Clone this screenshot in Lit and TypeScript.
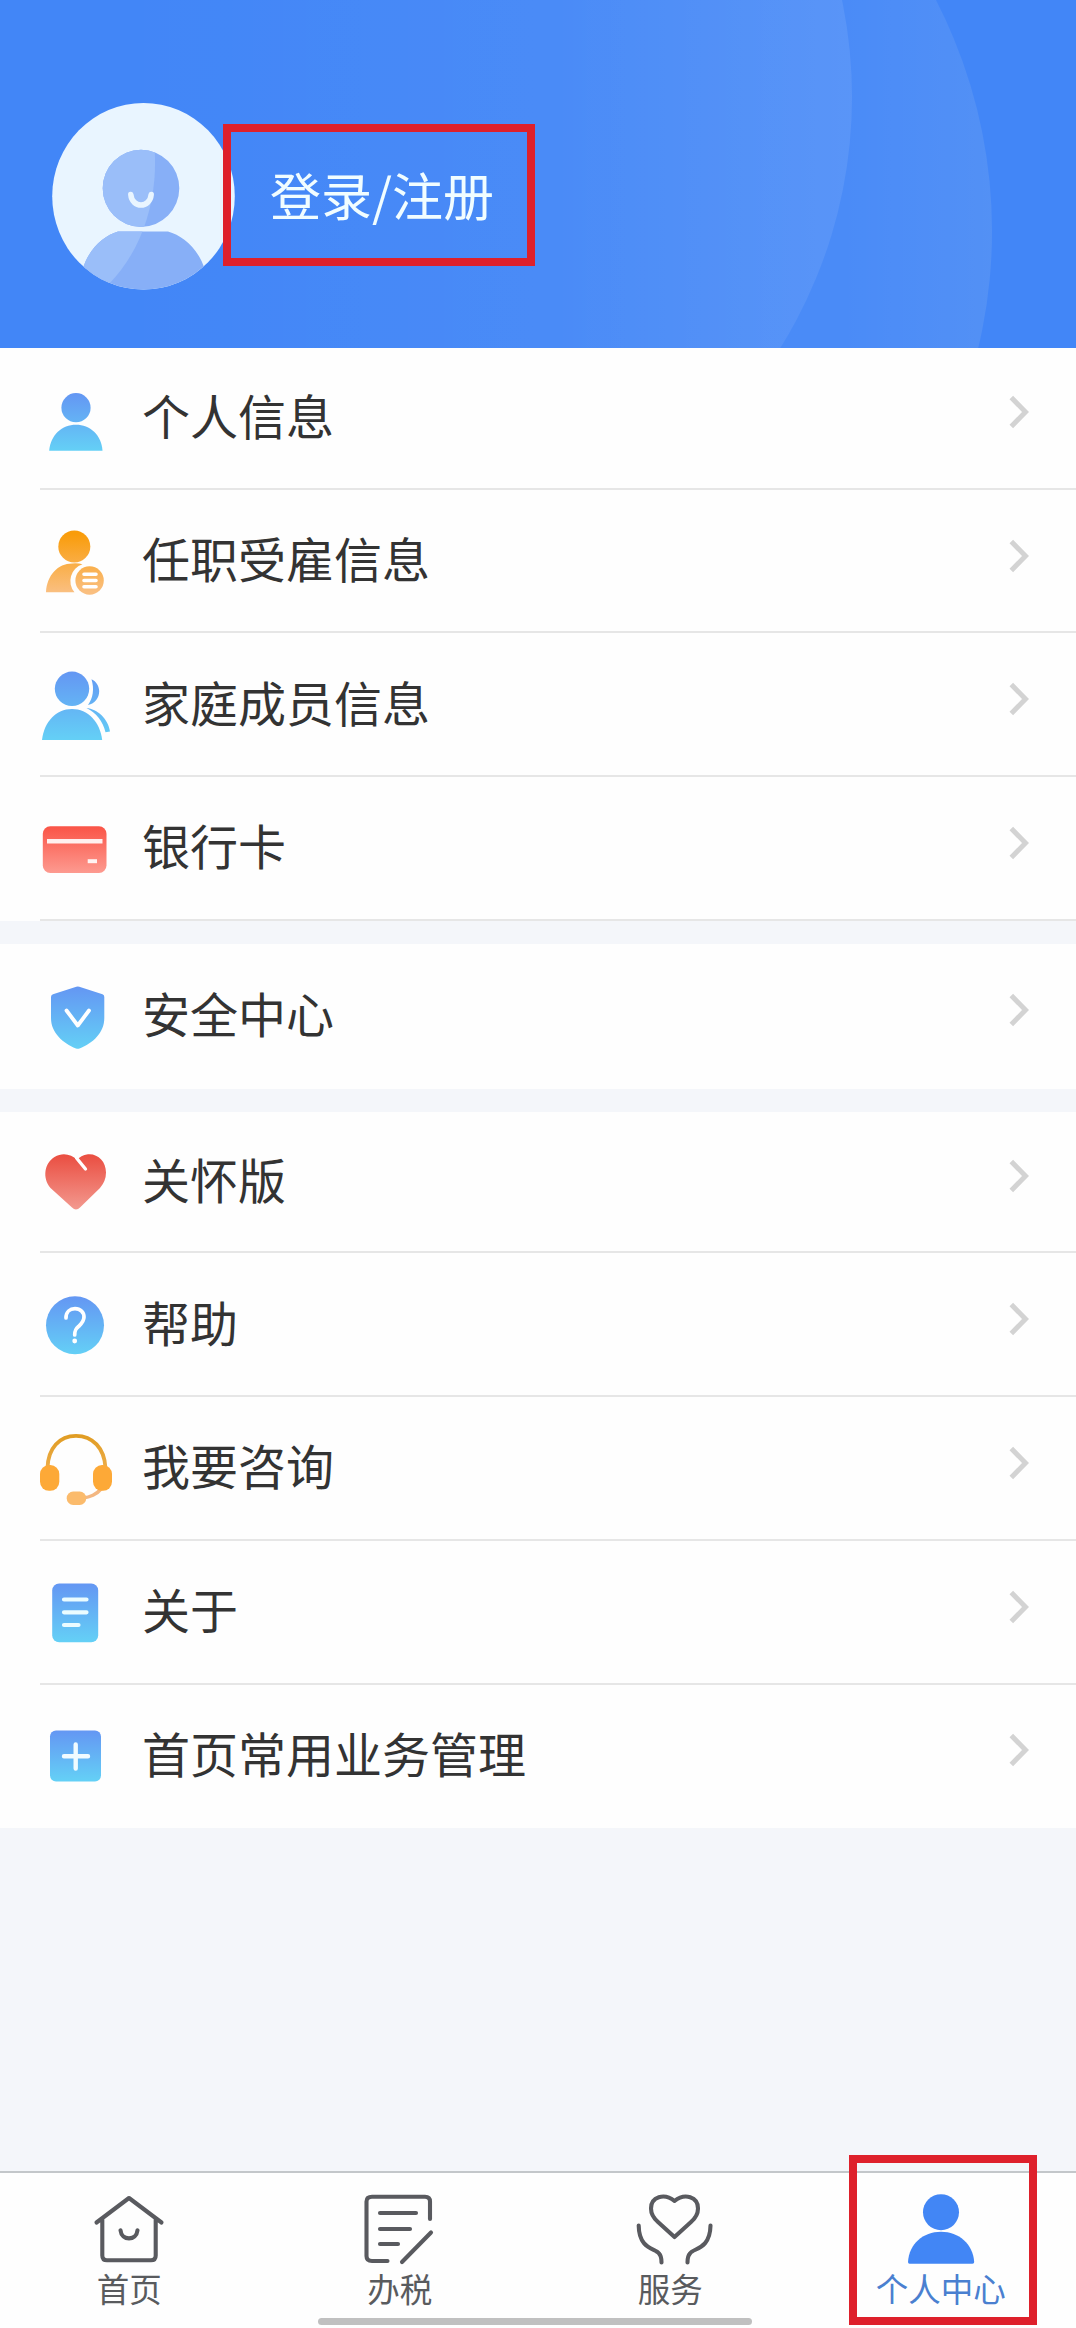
import { LitElement, html, svg, css, type SVGTemplateResult } from "lit";
import { customElement, property } from "lit/decorators.js";

interface Entry {
  label: string;
  icon: string;
}

const SECTIONS: Entry[][] = [
  [
    { label: "个人信息", icon: "person" },
    { label: "任职受雇信息", icon: "job" },
    { label: "家庭成员信息", icon: "family" },
    { label: "银行卡", icon: "card" },
  ],
  [{ label: "安全中心", icon: "shield" }],
  [
    { label: "关怀版", icon: "heart" },
    { label: "帮助", icon: "help" },
    { label: "我要咨询", icon: "headset" },
    { label: "关于", icon: "doc" },
    { label: "首页常用业务管理", icon: "plus" },
  ],
];

/* Vertical gradient spanning y1..y2 of the icon canvas. */
const grad = (id: string, from: string, to: string, y1: number, y2: number) => svg`
  <linearGradient id=${id} gradientUnits="userSpaceOnUse" x1="0" x2="0" y1=${y1} y2=${y2}>
    <stop offset="0" stop-color=${from}></stop><stop offset="1" stop-color=${to}></stop>
  </linearGradient>`;

const BLUE_A = "#6496f3";
const BLUE_B = "#64d0f6";

/* Row icons, drawn on an 80x80 canvas. */
const ICONS: Record<string, SVGTemplateResult> = {
  person: svg`${grad("g", BLUE_A, BLUE_B, 15, 73)}
    <g fill="url(#g)"><circle cx="40" cy="29.700" r="14.600"></circle>
    <path d="M13.200 72.800C14.500 57 26 46.800 40 46.800S65.500 57 66.500 72.800Z"></path></g>`,
  job: svg`${grad("g", "#f99c0a", "#fabf80", 12, 70)}
    <g fill="url(#g)"><circle cx="38.300" cy="24.500" r="16"></circle>
    <path d="M10 70.300C11 53 22 41.500 36 41.500Q42 41 46.500 42.300A17.500 17.500 0 0 0 38.500 70.300Z"></path>
    <circle cx="53.600" cy="58.500" r="14.200"></circle></g>
    <path d="M48 52.200H60M48 58.500H60M48 64.700H60" stroke="#fff" stroke-width="3.600" stroke-linecap="round"></path>`,
  family: svg`${grad("g", BLUE_A, BLUE_B, 6, 75)}
    <g fill="url(#g)"><circle cx="36" cy="23.800" r="17.200"></circle>
    <path d="M6 75C8 57 20 44 36 44S64 57 66.200 75Z"></path>
    <path d="M55.500 14.200C60.500 16.500 63 21 63.200 26C63.200 33 59 38.500 52 40C57 33 58.500 24 55.500 14.200Z"></path>
    <path d="M50.500 43C61 43.800 72.500 54 74 66.500L69.500 67.300C67 56.500 60 47.500 50.500 43Z"></path></g>`,
  card: svg`${grad("g", "#fa5548", "#fd9a90", 18, 64)}
    <rect x="6.800" y="17.300" width="63.700" height="46.700" rx="7.500" fill="url(#g)"></rect>
    <path d="M11 32.200H66.500" stroke="#fff" stroke-opacity=".9" stroke-width="4.400"></path>
    <path d="M51.700 52.200H61" stroke="#fff" stroke-opacity=".9" stroke-width="4"></path>`,
  shield: svg`${grad("g", BLUE_A, BLUE_B, 10, 73)}
    <path d="M40.300 10.800Q41.800 10.200 43.300 10.800L66.500 18.300Q68.300 19 68.300 21V42C68.300 57 57 67 43.500 72.500Q41.800 73.200 40 72.500C27 67 15 57 15 42V21Q15 19 17 18.300Z" fill="url(#g)"></path>
    <path d="M30.500 34.500L41.800 49.500L53 34.500" fill="none" stroke="#fff" stroke-width="3.800" stroke-linecap="round" stroke-linejoin="round"></path>`,
  heart: svg`${grad("g", "#ea4d40", "#f39a90", 12, 68)}
    <path d="M14.500 46C6 36 8.500 21 18.500 15C27 10 35.500 12.500 41 18Q44.500 13.500 52 12.300C62 11.500 70 19.500 70 30.500Q70 39 64 46L44 65.500Q40 69.600 36 65.500Z" fill="url(#g)"></path>
    <path d="M40.500 16L49.500 27" stroke="#fff" stroke-width="3.300" stroke-linecap="round"></path>`,
  help: svg`${grad("g", BLUE_A, BLUE_B, 11, 70)}
    <circle cx="39" cy="40.300" r="29" fill="url(#g)"></circle>
    <path d="M30 33C30 27 34 23.700 39 23.700C44.500 23.700 48 27.300 48 32C48 36.500 45 39 42.500 41.500C39.500 44 38.700 45.500 38.700 50" fill="none" stroke="#fff" stroke-width="3.700" stroke-linecap="round"></path>
    <circle cx="38.700" cy="56" r="2.400" fill="#fff"></circle>`,
  headset: svg`${grad("g", "#e09c22", "#f9bd70", 5, 76)}
    <path d="M11.500 39C12 19 23.500 6.800 40 6.800S68.500 19 69.500 39" fill="none" stroke="url(#g)" stroke-width="3.800"></path>
    <path d="M66 59C60 66 54.500 68 46 69.300" fill="none" stroke="#f3b781" stroke-width="3.500"></path>
    <rect x="4" y="36" width="19.300" height="25.800" rx="9" fill="#fda937"></rect>
    <rect x="57" y="36" width="19" height="25.800" rx="9" fill="#fda937"></rect>
    <rect x="30.700" y="62.500" width="19.500" height="13.500" rx="6.500" fill="#fbbb6c"></rect>`,
  doc: svg`${grad("g", BLUE_A, BLUE_B, 10, 69)}
    <rect x="16.200" y="10.500" width="46" height="58.800" rx="7" fill="url(#g)"></rect>
    <path d="M28 26.500H50.500M28 39.300H50.500M28 52H42.500" stroke="#eafcff" stroke-width="4.200" stroke-linecap="round"></path>`,
  plus: svg`${grad("g", BLUE_A, BLUE_B, 14, 65)}
    <rect x="14" y="14.500" width="51" height="51" rx="6" fill="url(#g)"></rect>
    <path d="M28 40.300H52M39.700 28.500V52.500" stroke="#f0fbff" stroke-width="4.400" stroke-linecap="round"></path>`,
};

/* Tab icons, drawn on an 84x72 canvas. */
const TAB_ICONS: Record<string, SVGTemplateResult> = {
  home: svg`<path d="M9.500 30.500L42 6L74.500 30.500M15.300 27V63.500Q15.300 68.300 20 68.300H64Q68.700 68.300 68.700 63.500V27M33.500 38.300C34.500 49 49.500 49 50.500 38.300"></path>`,
  tax: svg`<path d="M29.500 69H14Q8.500 69 8.500 64V9.500Q8.500 4.700 14 4.700H67Q72 4.700 72 9.500V27M22 21H58M22 37H52M22 52H40M73 40.500L44 70"></path>`,
  serve: svg`<path d="M46.500 9C57 .500 70 5 70 16.500C70 22 67 26.500 63 30L46.500 45L30 30C26 26.500 23 22 23 16.500C23 5 36 .500 46.500 9Z"></path>
    <path d="M10.700 33.500C11 58 28 56 31 61.500Q33.500 64 33.500 70.500M82.500 33.500C82 58 65 56 62 61.500Q59.500 64 59.500 70.500"></path>`,
  me: svg`<g fill="#4286f5" stroke="none"><circle cx="42" cy="20.200" r="18"></circle>
    <path d="M9 70C10 52 24 39.700 42 39.700S74 52 75.200 70Q75.200 71.700 73.500 71.700H10.500Q9 71.700 9 70Z"></path></g>`,
};

@customElement("menu-row")
class MenuRow extends LitElement {
  @property() label = "";
  @property() icon = "";
  @property({ reflect: true }) place = "inner";

  static styles = css`
    :host {
      display: flex;
      align-items: center;
      box-sizing: border-box;
      height: 143.700px;
      padding: 0 46px 0 36px;
    }
    :host([place="first"]) {
      height: 141.700px;
      padding-bottom: 1px;
    }
    :host([place="only"]) {
      height: 145px;
    }
    .icon {
      flex: none;
      width: 80px;
      height: 80px;
      overflow: visible;
    }
    .label {
      flex: 1;
      margin: 0 0 9px 26px;
      font-size: 48px;
      line-height: 60px;
      color: #333;
      white-space: nowrap;
    }
    .chevron {
      flex: none;
      width: 22px;
      height: 34px;
      margin-bottom: 12px;
    }
  `;

  render() {
    return html`
      <svg class="icon" viewBox="0 0 80 80">${ICONS[this.icon]}</svg>
      <span class="label">${this.label}</span>
      <svg class="chevron" viewBox="0 0 22 34">
        <path d="M3.300 2.500L17.500 17L3.300 31.500" fill="none" stroke="#d3d3d3" stroke-width="5"></path>
      </svg>
    `;
  }
}

@customElement("tab-item")
class TabItem extends LitElement {
  @property() label = "";
  @property() icon = "";
  @property({ type: Boolean, reflect: true }) active = false;

  static styles = css`
    :host {
      display: flex;
      flex-direction: column;
      align-items: center;
      padding-top: 19px;
      color: #595b5e;
    }
    :host([active]) {
      color: #4a80d0;
    }
    .icon {
      width: 84px;
      height: 72px;
      overflow: visible;
      fill: none;
      stroke: #595a5f;
      stroke-width: 4.100;
      stroke-linecap: round;
      stroke-linejoin: round;
    }
    .label {
      margin-top: 4px;
      font-size: 32.500px;
      line-height: 40px;
      white-space: nowrap;
    }
  `;

  render() {
    return html`
      <svg class="icon" viewBox="0 0 84 72">${TAB_ICONS[this.icon]}</svg>
      <span class="label">${this.label}</span>
    `;
  }
}

@customElement("app-root")
class AppRoot extends LitElement {
  static styles = css`
    :host {
      display: flex;
      flex-direction: column;
      position: relative;
      width: 1076px;
      height: 2328px;
      overflow: hidden;
      background: #f4f6fa;
      font-family: "Noto Sans CJK SC", sans-serif;
    }
    .header {
      position: relative;
      display: flex;
      align-items: center;
      flex: none;
      height: 348px;
      background: #4286f7;
    }
    .backdrop {
      position: absolute;
      inset: 0;
      width: 1076px;
      height: 348px;
    }
    .avatar {
      position: relative;
      flex: none;
      width: 183px;
      height: 187px;
      margin: 44px 0 0 52px;
    }
    .login {
      position: relative;
      margin: 40px 0 0 35px;
      font-size: 51px;
      line-height: 64px;
      color: #f1fdff;
      white-space: nowrap;
    }
    .menu {
      display: flex;
      flex-direction: column;
      gap: 23px;
    }
    .section {
      background: #fefefe;
    }
    .line {
      height: 2px;
      margin: -2px 0 0 40px;
      background: #e6e6e6;
    }
    .tabs {
      display: grid;
      grid-template-columns: repeat(4, 270.500px);
      box-sizing: border-box;
      height: 157px;
      margin: auto -6px 0;
      border-top: 2px solid #c3c7ca;
      background: #fefefe;
    }
    .mark {
      position: absolute;
      box-sizing: border-box;
      border: 8px solid #de202b;
    }
    .mark-login {
      left: 223px;
      top: 124px;
      width: 312px;
      height: 142px;
    }
    .mark-tab {
      left: 849px;
      top: 2155px;
      width: 188px;
      height: 170px;
    }
    .indicator {
      position: absolute;
      left: 318px;
      top: 2318px;
      width: 434px;
      height: 7px;
      border-radius: 4px;
      background: #c0c0c0;
    }
  `;

  private place(index: number, count: number) {
    if (count === 1) return "only";
    return index === 0 ? "first" : "inner";
  }

  render() {
    return html`
      <div class="header">
        <svg class="backdrop" viewBox="0 0 1076 348">
          <linearGradient id="outer" gradientUnits="userSpaceOnUse" x1="100" x2="992" y1="0" y2="0">
            <stop offset="0" stop-color="#fff" stop-opacity="0"></stop>
            <stop offset=".84" stop-color="#fff" stop-opacity=".045"></stop>
            <stop offset="1" stop-color="#fffbe0" stop-opacity=".09"></stop>
          </linearGradient>
          <linearGradient id="inner" gradientUnits="userSpaceOnUse" x1="200" x2="852" y1="0" y2="0">
            <stop offset="0" stop-color="#fff" stop-opacity="0"></stop>
            <stop offset=".55" stop-color="#fff" stop-opacity=".018"></stop>
            <stop offset="1" stop-color="#fff" stop-opacity=".085"></stop>
          </linearGradient>
          <circle cx="488" cy="231" r="504" fill="url(#outer)"></circle>
          <circle cx="377" cy="97" r="475" fill="url(#inner)"></circle>
        </svg>
        <svg class="avatar" viewBox="0 0 183 187">
          <clipPath id="disc"><ellipse cx="91.500" cy="93.300" rx="91.300" ry="93.300"></ellipse></clipPath>
          <clipPath id="figure">
            <ellipse cx="89" cy="85.300" rx="38.300" ry="38.600"></ellipse>
            <path d="M27 187C29 152 48 134 66 128.500H116C135 134 154 152 157 187Z"></path>
          </clipPath>
          <g clip-path="url(#disc)">
            <rect width="183" height="187" fill="#e9f5ff"></rect>
            <g clip-path="url(#figure)">
              <rect width="183" height="187" fill="#87aff7"></rect>
              <path d="M0 0H96Q105 40 102.500 75C99 118 83 154 57 181L0 187Z" fill="#9abef9"></path>
            </g>
            <path d="M78.800 91.500C80 105.500 98 105.500 99.200 91.500" fill="none" stroke="#e9f5ff" stroke-width="5.500" stroke-linecap="round"></path>
          </g>
        </svg>
        <span class="login">登录/注册</span>
      </div>
      <div class="menu">
        ${SECTIONS.map(
          (rows, s) => html`<div class="section">
            ${rows.map(
              (r, i) => html`<menu-row
                  .label=${r.label}
                  .icon=${r.icon}
                  .place=${this.place(i, rows.length)}
                ></menu-row>
                ${i < rows.length - 1 || s === 0 ? html`<div class="line"></div>` : ""}`
            )}
          </div>`
        )}
      </div>
      <div class="tabs">
        <tab-item label="首页" icon="home"></tab-item>
        <tab-item label="办税" icon="tax"></tab-item>
        <tab-item label="服务" icon="serve"></tab-item>
        <tab-item label="个人中心" icon="me" active></tab-item>
      </div>
      <div class="indicator"></div>
      <div class="mark mark-login"></div>
      <div class="mark mark-tab"></div>
    `;
  }
}
